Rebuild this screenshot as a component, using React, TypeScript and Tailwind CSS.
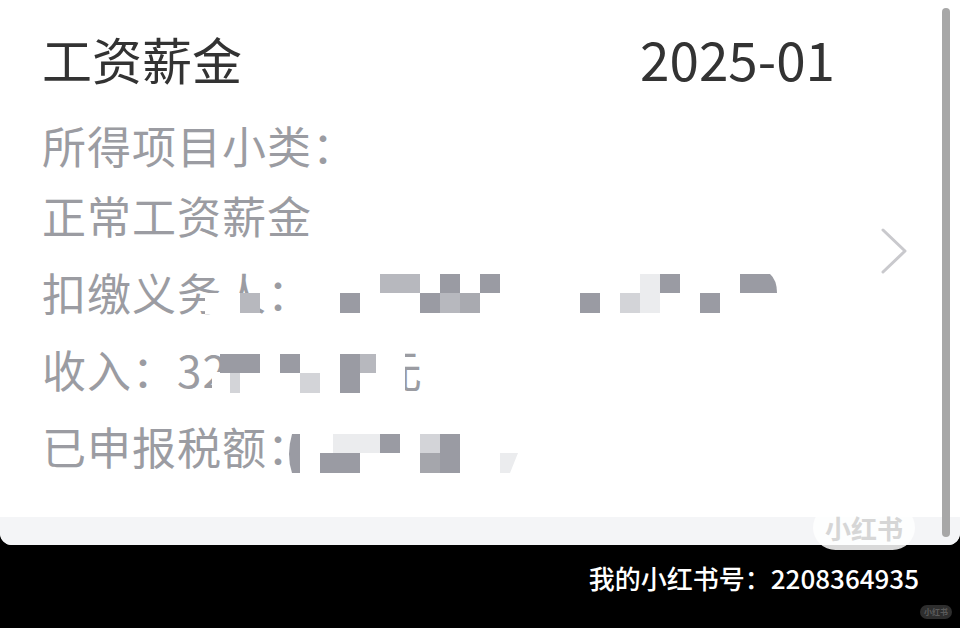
const font = { fontFamily: '"Noto Sans CJK SC", "Noto Sans", sans-serif' };

type Block = [number, number, number, number, string];

const DARK = "#9a9ba3";
const MID = "#b7b8be";
const LIGHT = "#d3d4d8";
const FAINT = "#ebecee";

// redaction mosaic, card coordinates
const blocks: Block[] = [
  // 扣缴义务人
  [205, 293, 35, 21, "#ffffff"],
  [240, 293, 20, 20, MID],
  [340, 293, 20, 20, DARK],
  [380, 274, 40, 19, MID],
  [440, 274, 20, 19, DARK],
  [420, 293, 20, 20, DARK],
  [440, 293, 20, 20, MID],
  [460, 293, 20, 20, "#a9aab0"],
  [480, 274, 20, 19, DARK],
  [580, 293, 20, 20, DARK],
  [620, 293, 20, 20, LIGHT],
  [640, 293, 20, 20, FAINT],
  [640, 274, 20, 19, FAINT],
  [660, 274, 20, 19, DARK],
  [700, 293, 20, 20, DARK],
  // 收入
  [212, 372, 30, 22, "#ffffff"],
  [220, 354, 40, 19, DARK],
  [230, 373, 10, 20, LIGHT],
  [280, 354, 20, 19, DARK],
  [300, 373, 20, 20, LIGHT],
  [340, 354, 20, 39, DARK],
  [360, 354, 20, 19, MID],
  [376, 348, 29, 48, "#ffffff"],
  // 已申报税额
  [320, 453, 40, 20, DARK],
  [333, 434, 47, 19, FAINT],
  [380, 434, 20, 19, DARK],
  [420, 434, 20, 19, LIGHT],
  [420, 453, 20, 20, "#a5a6ac"],
  [440, 434, 20, 39, DARK],
];

function Mosaic() {
  return (
    <svg className="absolute left-0 top-0 pointer-events-none" width="960" height="545" viewBox="0 0 960 545">
      {blocks.map(([x, y, w, h, c], i) => (
        <rect key={i} x={x} y={y} width={w} height={h} fill={c} />
      ))}
      <path d="M740 274 H770 Q777 280 777 293 H740 Z" fill={DARK} />
      <path d="M300 434 V473 H292 Q286 455 292 434 Z" fill={DARK} />
      <path d="M500 453 H518 L510 473 H500 Z" fill={FAINT} />
    </svg>
  );
}

export default function App() {
  return (
    <div className="w-[960px] h-[628px] bg-black relative overflow-hidden" style={font}>
      <div className="relative h-[545px] bg-white rounded-b-[12px] overflow-hidden flex flex-col">
        <div className="flex-1 flex pl-[42px] pt-[27px]">
          <div className="w-[793px] flex flex-col">
            <div className="flex items-center justify-between h-[62px] text-[#333333]">
              <span className="text-[50px] leading-none">工资薪金</span>
              <span className="text-[53px] leading-none">2025-01</span>
            </div>
            <div className="mt-[21px] text-[44px] leading-[70px] tracking-[1px] text-[#9b9ca2]">
              <div>所得项目小类：</div>
              <div>正常工资薪金</div>
            </div>
            <div className="mt-[4px] flex flex-col text-[44px] leading-[77px] tracking-[1px] text-[#9b9ca2]">
              <div>扣缴义务人：</div>
              <div>
                收入：32<span className="ml-[150px]">元</span>
              </div>
              <div>已申报税额：</div>
            </div>
          </div>
          <div className="ml-[45px] mt-[201px]">
            <svg width="28" height="46" viewBox="0 0 28 46" fill="none">
              <polyline points="3,2 25,23 3,44" stroke="#c9c9cd" strokeWidth="3" strokeLinecap="round" strokeLinejoin="round" />
            </svg>
          </div>
        </div>
        <div className="h-[28px] bg-[#f4f5f7]" />
        <Mosaic />
        <div className="absolute right-[10px] top-[8px] bottom-[8px] w-[8px] rounded-full bg-[#a7a7a7]" />
      </div>

      <div className="absolute left-[813px] top-[505px] w-[102px] h-[45px] rounded-full bg-white/85 flex items-center justify-center">
        <span className="text-[26px] font-bold text-[#d6d6d6] leading-none">小红书</span>
      </div>

      <div className="flex justify-end pr-[41px] pt-[16px]">
        <span className="text-[26px] leading-[34px] font-medium text-white">我的小红书号：2208364935</span>
      </div>
      <div className="absolute left-[920px] top-[605px] w-[32px] h-[14px] rounded-full bg-[#2e2e2e] flex items-center justify-center">
        <span className="text-[8px] leading-none font-bold text-[#5a5a5a]">小红书</span>
      </div>
    </div>
  );
}
